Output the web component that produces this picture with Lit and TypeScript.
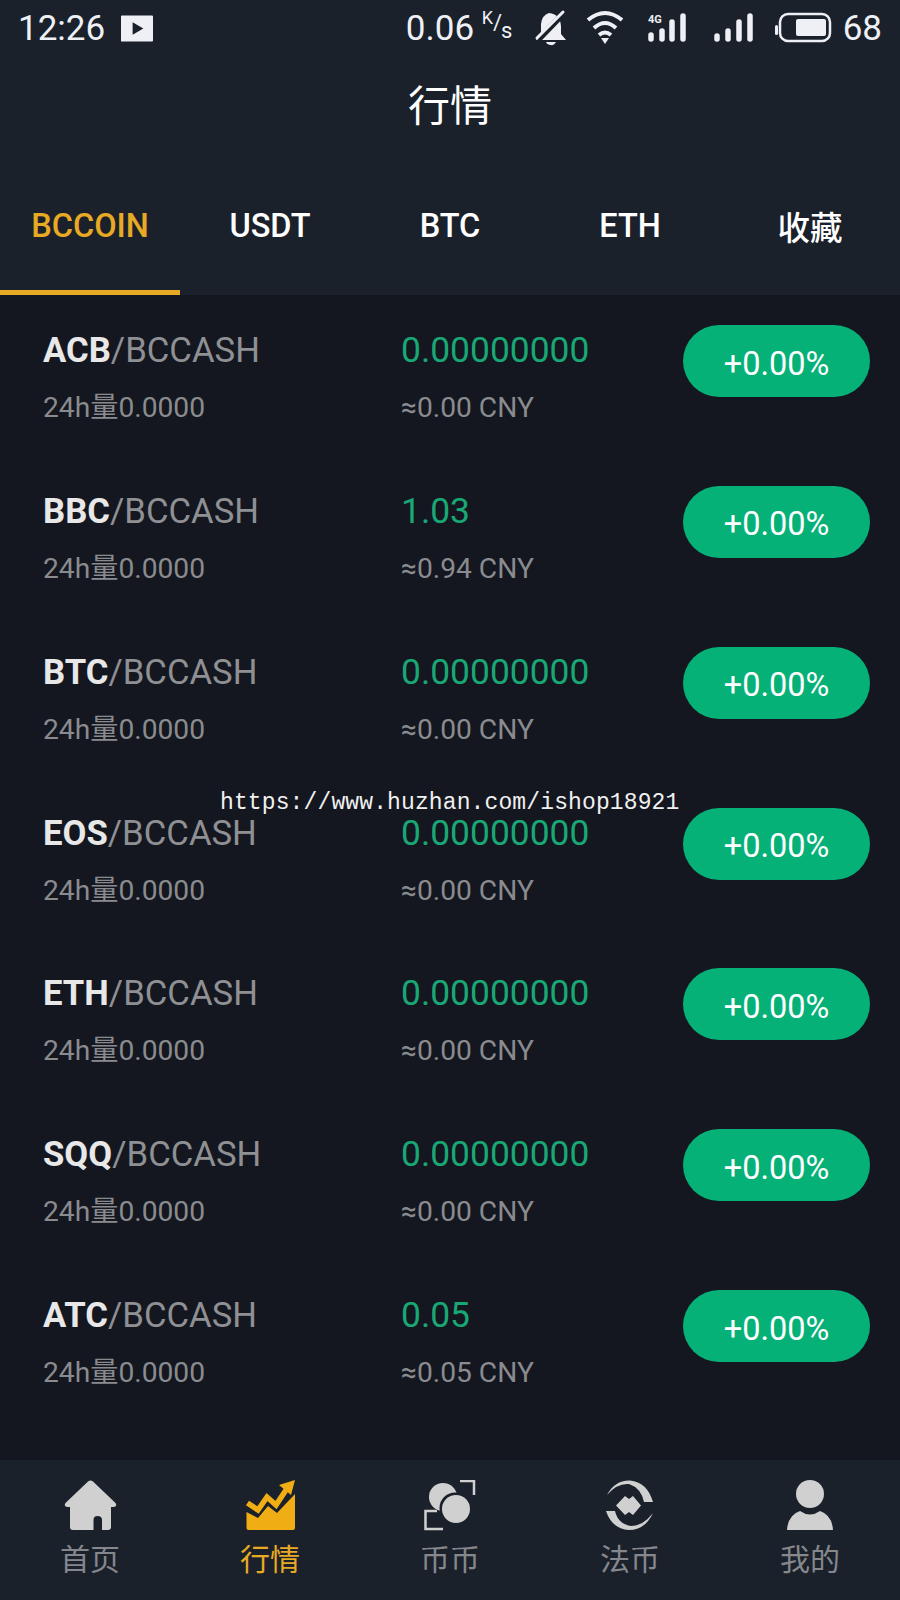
import { LitElement, html, css, svg } from "lit";
import { customElement } from "lit/decorators.js";

const rows = [
  ["ACB", "0.00000000", "0.00"],
  ["BBC", "1.03", "0.94"],
  ["BTC", "0.00000000", "0.00"],
  ["EOS", "0.00000000", "0.00"],
  ["ETH", "0.00000000", "0.00"],
  ["SQQ", "0.00000000", "0.00"],
  ["ATC", "0.05", "0.05"],
];
const tabs = ["BCCOIN", "USDT", "BTC", "ETH", "收藏"];

const icons = [
  svg`<path d="M24 1.5 Q26.5 -0.5 29 1.5 L51.5 23 Q53.5 26 50 27 L47 27 L47 47 Q47 50 44 50 L38 50 L38 40 Q38 36 33.5 36 Q29.5 36 29.5 40 L29.5 50 L9 50 Q6 50 6 47 L6 27 L3 27 Q-0.5 26 1.5 23 Z" fill="#d0d0d0"/>`,
  svg`<path d="M2.5 32 L14 38 L24 26 L33 33 L51 14 L51 48 Q51 50 49 50 L4.5 50 Q2.5 50 2.5 48 Z" fill="#f0ad14"/>
      <path d="M3.5 23 L14 30 L23 17 L32 25 L44 7" fill="none" stroke="#f0ad14" stroke-width="5.5"/>
      <path d="M35 5 L51 0 L47 15 Z" fill="#f0ad14"/>`,
  svg`<path d="M13 31 L1.5 31 L1.5 49 L19 49 M36 1 L50 1 L50 15" fill="none" stroke="#d0d0d0" stroke-width="2.5"/>
      <circle cx="19" cy="17" r="14" fill="#d0d0d0"/>
      <circle cx="31" cy="28" r="15.5" fill="#1a212b"/>
      <circle cx="32" cy="29" r="14" fill="#d0d0d0"/>`,
  svg`<path d="M3 15 Q11 0 26 0.5 Q43 2 49 22 L40 22 Q37 8 25 4 Q13 3 3 15 Z" fill="#d0d0d0"/>
      <path d="M49 33 Q41 50 25 50 Q8 49 2 31 L11 31 Q14 44 27 46 Q39 46 49 33 Z" fill="#d0d0d0"/>
      <path d="M21 16 L25 19 L29 16 L37 25.5 L29 35 L25 32 L21 35 L12 25.5 Z" fill="#d0d0d0"/>`,
  svg`<circle cx="26" cy="14" r="14" fill="#d0d0d0"/>
      <path d="M3 50 Q4 35 16 31 Q26 38 36 31 Q48 35 49 50 Z" fill="#d0d0d0"/>`,
];
const navLabels = ["首页", "行情", "币币", "法币", "我的"];

@customElement("app-root")
export class AppRoot extends LitElement {
  static styles = css`
    :host {
      display: block;
      position: relative;
      width: 900px;
      height: 1600px;
      overflow: hidden;
      background: #14171f;
      font-family: Roboto, "Noto Sans CJK SC", sans-serif;
    }
    .page { display: flex; flex-direction: column; height: 1600px; }
    .top { background: #1a212b; height: 295px; flex: none; display: flex; flex-direction: column; }
    .status {
      height: 56px;
      display: flex;
      align-items: center;
      padding: 0 18px;
      color: #eef0f5;
      font-size: 35px;
      flex: none;
    }
    .time { width: 106px; }
    .play { display: block; width: 33px; height: 27px; }
    .speed { margin-left: 253px; white-space: nowrap; width: 72px; }
    .unit { width: 50px; height: 40px; padding-left: 6px; box-sizing: border-box; display: flex; align-items: flex-start; flex: none; font-size: 18px; line-height: 20px; }
    .unit .k { margin-top: 0; }
    .unit .sl { font-size: 22px; margin-top: 5px; }
    .unit .s { font-size: 22px; margin-top: 13px; margin-left: -1px; }
    .st-icons { display: block; width: 308px; height: 44px; flex: none; margin-left: 2px; }
    .batt { margin-left: 7px; }
    .title {
      height: 102px;
      text-align: center;
      color: #fff;
      font-size: 42px;
      line-height: 102px;
      flex: none;
    }
    .tabs { flex: 1; display: flex; }
    .tab {
      flex: 1;
      display: flex;
      align-items: center;
      justify-content: center;
      color: #fff;
      font-size: 32.5px;
      font-weight: 500;
      padding-top: 3px;
      border-bottom: 5px solid transparent;
      box-sizing: border-box;
    }
    .tab.on { color: #e8a924; border-bottom-color: #e8a924; }
    .list { flex: 1; display: flex; flex-direction: column; }
    .row {
      height: 160.85px;
      flex: none;
      box-sizing: border-box;
      padding: 30px 30px 0 43px;
      display: flex;
      align-items: flex-start;
    }
    .col { display: flex; flex-direction: column; }
    .c1 { width: 358px; }
    .c2 { flex: 1; }
    .main { font-size: 35.4px; line-height: 50px; white-space: nowrap; }
    .name { font-size: 34.7px; }
    .main b { color: #e8e8e8; font-weight: 700; }
    .main span { color: #8f9094; }
    .price { color: #19a875; }
    .sub { margin-top: 8px; font-size: 28.2px; line-height: 50px; color: #8a8b8f; white-space: nowrap; }
    .pill {
      width: 187px;
      height: 72px;
      border-radius: 36px;
      background: #06b177;
      color: #fff;
      font-size: 32.5px;
      display: flex;
      align-items: center;
      justify-content: center;
      padding-top: 5px;
      box-sizing: border-box;
    }
    .nav {
      height: 140px;
      flex: none;
      background: #1a212b;
      display: flex;
    }
    .nav-item {
      flex: 1;
      display: flex;
      flex-direction: column;
      align-items: center;
      padding-top: 20px;
      color: #85878d;
      font-size: 30px;
      line-height: 44px;
    }
    .nav-item.on { color: #e8a924; }
    .nav-item svg { width: 53px; height: 53px; display: block; margin-bottom: 5px; }
    .mark {
      position: absolute;
      left: 220px;
      top: 788px;
      font-family: "Liberation Mono", monospace;
      font-size: 23px;
      letter-spacing: 0.12px;
      line-height: 30px;
      color: #f0f0f0;
      white-space: nowrap;
    }
  `;

  render() {
    return html`
      <div class="page">
        <div class="top">
          <div class="status">
            <span class="time">12:26</span>
            <svg class="play" viewBox="0 0 33 27">
              <rect width="33" height="27" rx="1" fill="#eef0f5" />
              <path d="M12 7 L23 13.5 L12 20 Z" fill="#1a212b" />
            </svg>
            <span class="speed">0.06</span>
            <span class="unit"><span class="k">K</span><span class="sl">/</span><span class="s">s</span></span>
            <svg class="st-icons" viewBox="0 0 308 44">
              <g fill="#eef0f5">
                <path d="M21 7 Q32 8 33 20 L33 28 L38 34 L8 34 L13 28 L13 18 Q14 9 21 7 Z" />
                <path d="M18 36 L28 36 Q26 40 23 39 Q19 39 18 36 Z" />
              </g>
              <path d="M10 34 L38 5" stroke="#1a212b" stroke-width="6" />
              <path d="M9 32 L35 6" stroke="#eef0f5" stroke-width="3" stroke-linecap="round" />
              <g fill="none" stroke="#eef0f5" stroke-width="4">
                <path d="M60 14 Q77 0 94 14" />
                <path d="M66 22 Q77 12 88 22" />
                <path d="M71 29 Q77 24 83 29" />
              </g>
              <path d="M73 32 L81 32 L77 38 Z" fill="#eef0f5" />
              <text x="120" y="17" font-size="11" font-weight="700" font-family="Roboto" fill="#eef0f5">4G</text>
              <g stroke="#eef0f5" stroke-width="5.5" stroke-linecap="round">
                <path d="M123 29 L123 33 M134 25 L134 33 M144 16 L144 33 M155 10 L155 33" />
                <path d="M189 30 L189 33 M200 25 L200 33 M211 16 L211 33 M222 10 L222 33" />
              </g>
              <rect x="252" y="8" width="50" height="27" rx="8" fill="none" stroke="#eef0f5" stroke-width="2.5" />
              <rect x="247" y="19" width="3" height="10" rx="1.5" fill="#eef0f5" />
              <rect x="268" y="13" width="30" height="17" rx="2" fill="#eef0f5" />
            </svg>
            <span class="batt">68</span>
          </div>
          <div class="title">行情</div>
          <div class="tabs">
            ${tabs.map((t, i) => html`<div class="tab ${i === 0 ? "on" : ""}">${t}</div>`)}
          </div>
        </div>
        <div class="list">
          ${rows.map(
            (r) => html`
              <div class="row">
                <div class="col c1">
                  <div class="main name"><b>${r[0]}</b><span>/BCCASH</span></div>
                  <div class="sub">24h量0.0000</div>
                </div>
                <div class="col c2">
                  <div class="main price">${r[1]}</div>
                  <div class="sub">≈${r[2]} CNY</div>
                </div>
                <div class="pill">+0.00%</div>
              </div>
            `
          )}
        </div>
        <div class="nav">
          ${navLabels.map(
            (l, i) => html`
              <div class="nav-item ${i === 1 ? "on" : ""}">
                <svg viewBox="0 0 53 53">${icons[i]}</svg>
                <span>${l}</span>
              </div>
            `
          )}
        </div>
      </div>
      <div class="mark">https://www.huzhan.com/ishop18921</div>
    `;
  }
}
